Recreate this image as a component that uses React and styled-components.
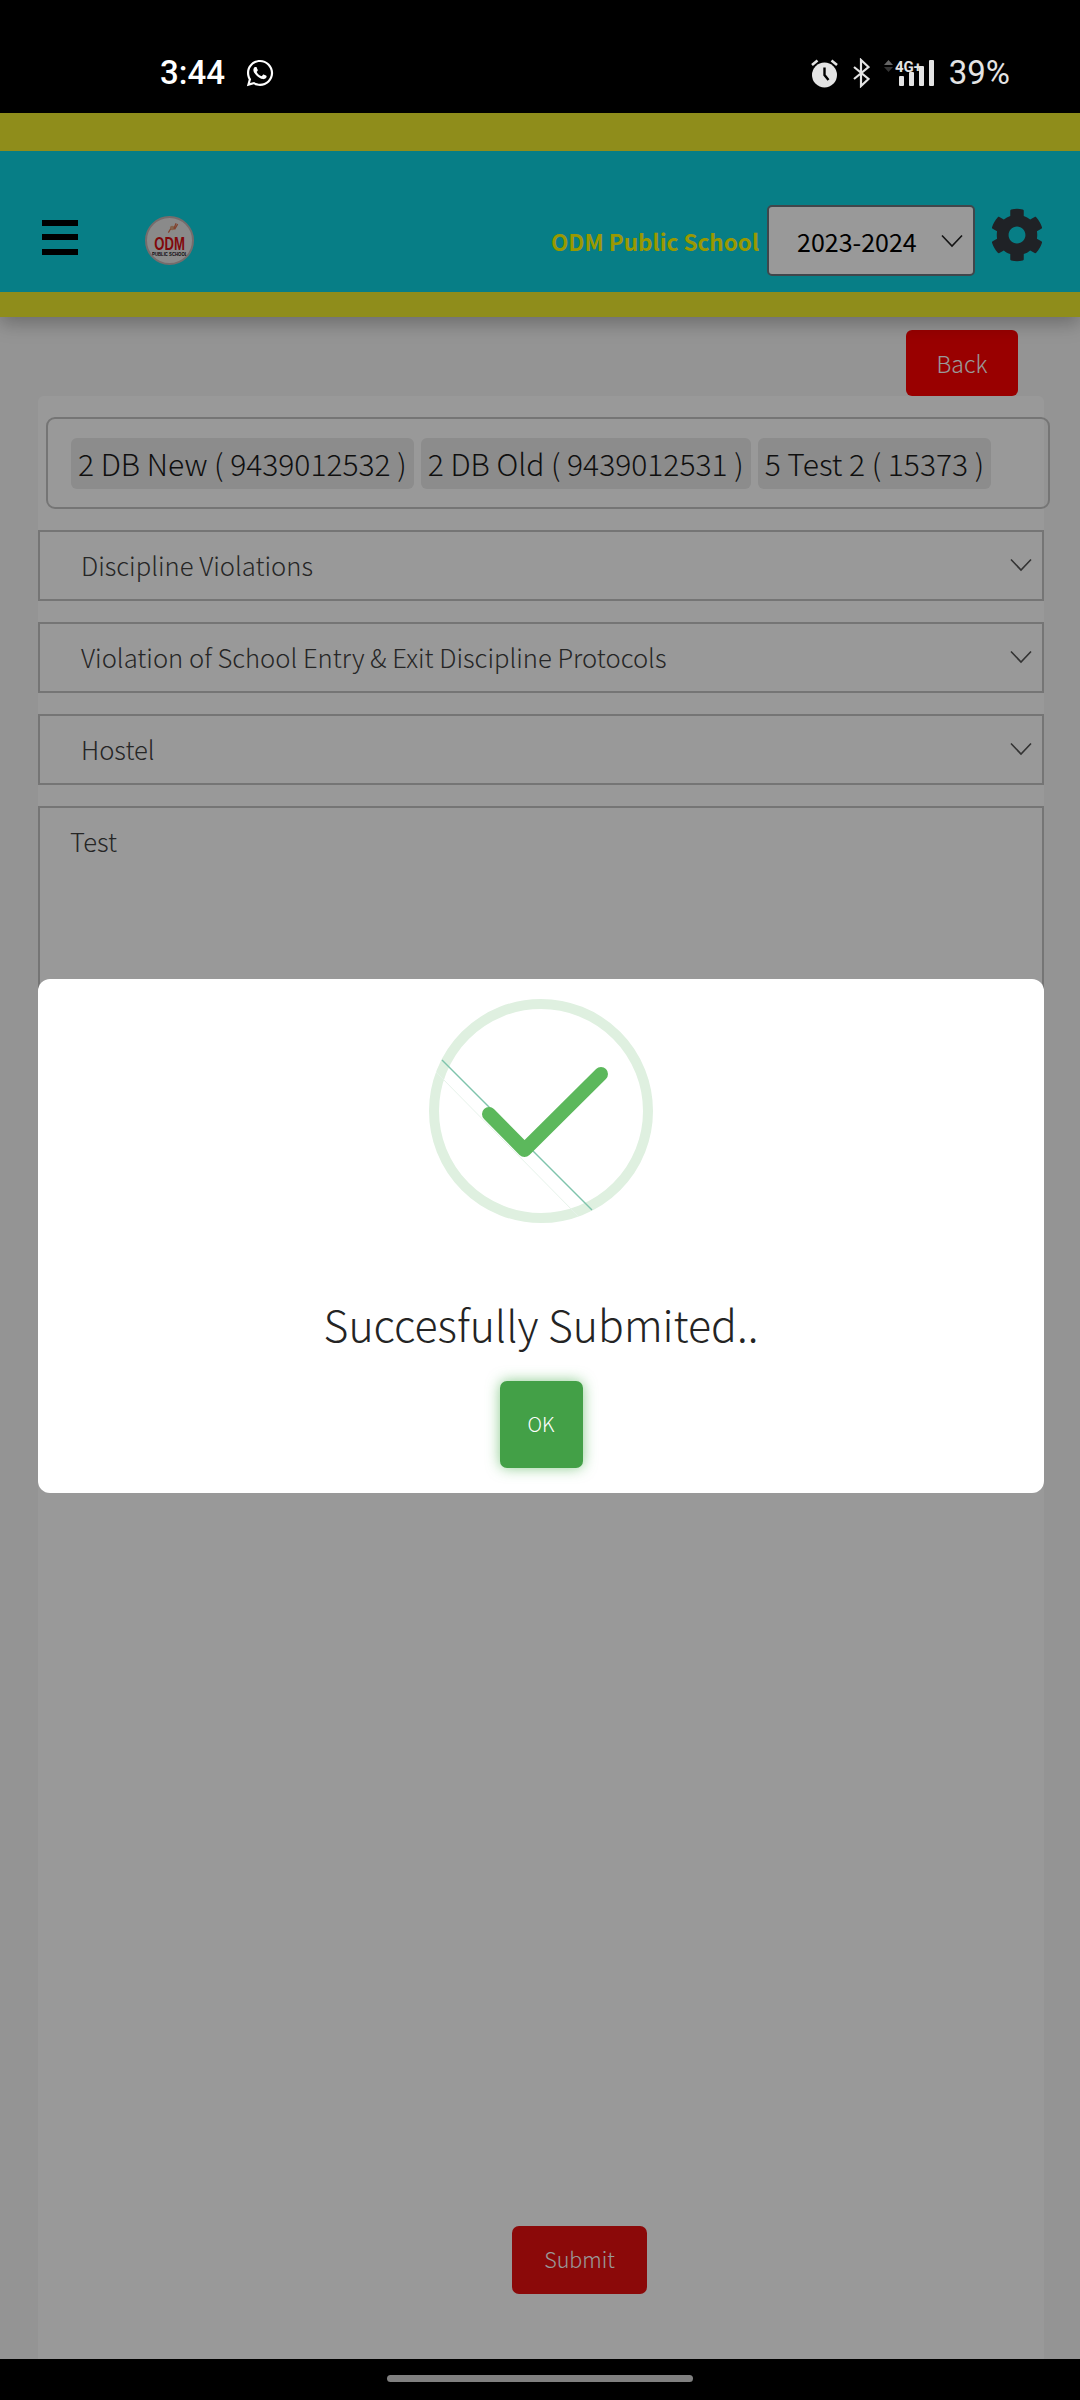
import React from "react";
import styled, { createGlobalStyle } from "styled-components";
import { FaCog, FaWhatsapp } from "react-icons/fa";

const Global = createGlobalStyle`
  html, body { margin: 0; padding: 0; background: #000; }
  #root { width: 1080px; height: 2400px; }
  * { box-sizing: border-box; }
`;

const sans = `"Noto Sans CJK SC", "Noto Sans", sans-serif`;

const Screen = styled.div`
  position: relative;
  width: 1080px;
  height: 2400px;
  display: flex;
  flex-direction: column;
  overflow: hidden;
  background: #000;
  font-family: ${sans};
`;

const StatusBar = styled.div`
  height: 113px;
  flex: none;
  padding: 32px 70px 0 160px;
  display: flex;
  align-items: center;
  justify-content: space-between;
  color: #fff;
  font-family: Roboto, sans-serif;
  position: relative;
  z-index: 3;
`;
const StatusGroup = styled.div`
  display: flex;
  align-items: center;
  gap: ${(p) => p.$gap}px;
`;
const Time = styled.span`
  font-size: 33px;
  font-weight: 500;
  line-height: 40px;
`;
const Battery = styled.span`
  font-size: 33px;
  font-weight: 400;
  line-height: 40px;
  color: #e4e4e4;
`;

const Page = styled.div`
  flex: 1;
  display: flex;
  flex-direction: column;
  background: #f7f7f7;
  min-height: 0;
`;

const AppBar = styled.header`
  flex: none;
  height: 204px;
  background: #0dd2df;
  border-top: 38px solid #eeeb2d;
  border-bottom: 25px solid #eeeb2d;
  box-shadow: 0 6px 18px rgba(0, 0, 0, 0.28);
  display: flex;
  align-items: center;
  padding: 38px 36px 0 42px;
  position: relative;
  z-index: 1;
`;
const Burger = styled.div`
  width: 36px;
  height: 35px;
  display: flex;
  flex-direction: column;
  justify-content: space-between;
  margin-top: -7px;
  span {
    display: block;
    height: 6px;
    background: #000;
  }
`;
const Logo = styled.div`
  width: 49px;
  height: 49px;
  margin-left: 67px;
  border-radius: 50%;
  background: #e6e6e6;
  border: 2px solid #c4b4b4;
  display: flex;
  flex-direction: column;
  align-items: center;
  justify-content: flex-end;
  padding-bottom: 5px;
  position: relative;
  overflow: hidden;
  flex: none;
`;
const LogoMain = styled.span`
  font: 700 16px/14px "Liberation Sans", sans-serif;
  color: #d80d12;
  transform: scale(0.82, 1.12);
`;
const LogoSub = styled.span`
  font: 700 5px/7px "Liberation Sans", sans-serif;
  color: #111;
  white-space: nowrap;
  transform: scaleX(0.85);
`;
const LogoFigure = styled.svg`
  position: absolute;
  top: 3px;
  left: 19px;
`;
const School = styled.span`
  margin-left: auto;
  font-size: 22.5px;
  font-weight: 700;
  color: #ffff00;
  white-space: nowrap;
`;
const YearSelect = styled.div`
  width: 208px;
  height: 71px;
  margin-left: 8px;
  background: #fff;
  border: 2px solid #6c757d;
  border-radius: 5px;
  display: flex;
  align-items: center;
  justify-content: space-between;
  padding: 0 10px 0 28px;
  font-size: 25px;
  color: #000;
  flex: none;
`;
const Gear = styled(FaCog)`
  color: #343a40;
  font-size: 54px;
  margin-left: 15px;
  margin-top: -12px;
  flex: none;
`;

const Back = styled.button`
  align-self: flex-end;
  width: 112px;
  height: 66px;
  margin: 13px 62px 0 0;
  border: 0;
  border-radius: 6px;
  background: #ff0000;
  color: #fff;
  font: 300 23px ${sans};
  flex: none;
`;

const Card = styled.main`
  flex: 1;
  margin: 0 36px 0 38px;
  background: #fff;
  border-radius: 6px 6px 0 0;
  display: flex;
  flex-direction: column;
  padding-top: 21px;
  align-items: stretch;
  min-height: 0;
`;
const ChipBox = styled.div`
  width: 1004px;
  height: 92px;
  margin-left: 8px;
  border: 2px solid #c4c4c4;
  border-radius: 9px;
  display: flex;
  align-items: center;
  gap: 7px;
  padding: 0 0 0 23px;
`;
const Chip = styled.span`
  height: 51px;
  padding: 0 7px;
  border-radius: 6px;
  background: #e9e9e9;
  display: flex;
  align-items: center;
  font-size: 30px;
  font-weight: 300;
  color: #1a1a1a;
  white-space: nowrap;
`;
const Dropdown = styled.div`
  height: 71px;
  margin-top: 21px;
  border: 2px solid #c4c4c4;
  display: flex;
  align-items: center;
  justify-content: space-between;
  padding: 0 10px 2px 41px;
  font-size: 25.600px;
  font-weight: 300;
  color: #404040;
`;
const TextBox = styled.div`
  height: 600px;
  margin-top: 21px;
  border: 2px solid #c4c4c4;
  padding: 13px 30px;
  font-size: 25.600px;
  font-weight: 300;
  line-height: 40px;
  color: #404040;
`;
const SubmitRow = styled.div`
  margin-top: auto;
  padding: 0 397px 65px 474px;
  display: flex;
`;
const Submit = styled.button`
  width: 135px;
  height: 68px;
  border: 0;
  border-radius: 7px;
  background: #e81010;
  color: #fff;
  padding: 0 0 4px;
  font: 300 21.500px ${sans};
`;

const Backdrop = styled.div`
  position: absolute;
  left: 0;
  right: 0;
  top: 113px;
  height: 2246px;
  background: rgba(0, 0, 0, 0.4);
  z-index: 2;
`;
const Modal = styled.div`
  position: absolute;
  left: 38px;
  top: 866px;
  width: 1006px;
  height: 514px;
  background: #fff;
  border-radius: 12px;
  display: flex;
  flex-direction: column;
  align-items: center;
  padding-top: 20px;
`;
const CheckArt = styled.svg`
  display: block;
  flex: none;
`;
const Title = styled.h2`
  margin: 72px 0 0;
  font-size: 42.800px;
  font-weight: 300;
  line-height: 56px;
  color: #242424;
`;
const Ok = styled.button`
  width: 83px;
  height: 87px;
  margin-top: 30px;
  border: 0;
  border-radius: 7px;
  background: #43a047;
  box-shadow: 0 0 14px rgba(76, 175, 80, 0.65);
  color: #fff;
  padding: 0 0 3px;
  font: 300 20px ${sans};
`;

const Nav = styled.div`
  height: 41px;
  flex: none;
  background: #000;
  display: flex;
  justify-content: center;
  padding-top: 16px;
`;
const Pill = styled.div`
  width: 306px;
  height: 7px;
  border-radius: 4px;
  background: #808080;
`;

const Chevron = ({ dark }) => (
  <svg width="22" height="14" viewBox="0 0 22 14" fill="none">
    <path d="M1 1.500 L11 12 L21 1.500" stroke={dark ? "#222" : "#555"} strokeWidth="1.600" />
  </svg>
);

const Alarm = () => (
  <svg width="27" height="30" viewBox="0 0 27 30">
    <circle cx="13.500" cy="17" r="12.500" fill="#e4e4e4" />
    <path d="M13.500 9.500 V17 L17.500 22" stroke="#000" strokeWidth="2.400" fill="none" />
    <path d="M1 7 L6.500 2.500 M26 7 L20.500 2.500" stroke="#e4e4e4" strokeWidth="2.600" />
  </svg>
);
const Bluetooth = () => (
  <svg width="17" height="30" viewBox="0 0 17 30" fill="none">
    <path d="M1 9 L15.500 21 L8 28 V2 L15.500 9 L1 21" stroke="#e4e4e4" strokeWidth="2.200" />
  </svg>
);
const Signal = () => (
  <svg width="50" height="32" viewBox="0 0 50 32">
    <path d="M0 8 L4.500 3 L9 8 Z" fill="#666" />
    <path d="M0 10 L4.500 15 L9 10 Z" fill="#333" />
    <text x="11" y="15" fontFamily="Roboto, sans-serif" fontWeight="700" fontSize="15" fill="#e4e4e4">4G+</text>
    <rect x="15" y="19" width="5" height="10" rx="1" fill="#e4e4e4" />
    <rect x="25" y="15" width="5" height="14" rx="1" fill="#e4e4e4" />
    <rect x="35" y="9" width="5" height="20" rx="1" fill="#e4e4e4" />
    <rect x="45" y="3" width="5" height="26" rx="1" fill="#e4e4e4" />
  </svg>
);
const Check = () => (
  <CheckArt width="224" height="224" viewBox="429 999 224 224">
    <circle cx="541" cy="1111" r="107" fill="none" stroke="#dff0e0" strokeWidth="10" />
    <path d="M442 1060 L592 1210" stroke="#7fc4ac" strokeWidth="1.400" />
    <path d="M436 1072 L578 1216" stroke="#e6f2ea" strokeWidth="1" />
    <path d="M489 1114 L524.500 1150 L601 1074" fill="none" stroke="#5cb85c" strokeWidth="14" strokeLinecap="round" strokeLinejoin="round" />
  </CheckArt>
);

export default function App() {
  return (
    <Screen>
      <Global />
      <StatusBar>
        <StatusGroup $gap={20}>
          <Time>3:44</Time>
          <FaWhatsapp size={30} color="#fff" />
        </StatusGroup>
        <StatusGroup $gap={14.5}>
          <Alarm />
          <Bluetooth />
          <Signal />
          <Battery>39%</Battery>
        </StatusGroup>
      </StatusBar>
      <Page>
        <AppBar>
          <Burger><span /><span /><span /></Burger>
          <Logo>
            <LogoFigure width="14" height="14" viewBox="0 0 18 14">
              <circle cx="8" cy="7" r="3" fill="#d8a47f" />
              <path d="M3 13 L6 8 M13 1 L10 8 M15 2 L11 9" stroke="#d8704f" strokeWidth="1.600" />
            </LogoFigure>
            <LogoMain>ODM</LogoMain>
            <LogoSub>PUBLIC SCHOOL</LogoSub>
          </Logo>
          <School>ODM Public School</School>
          <YearSelect>2023-2024<Chevron dark /></YearSelect>
          <Gear />
        </AppBar>
        <Back>Back</Back>
        <Card>
          <ChipBox>
            <Chip>2 DB New ( 9439012532 )</Chip>
            <Chip>2 DB Old ( 9439012531 )</Chip>
            <Chip>5 Test 2 ( 15373 )</Chip>
          </ChipBox>
          <Dropdown>Discipline Violations<Chevron /></Dropdown>
          <Dropdown>Violation of School Entry &amp; Exit Discipline Protocols<Chevron /></Dropdown>
          <Dropdown>Hostel<Chevron /></Dropdown>
          <TextBox>Test</TextBox>
          <SubmitRow><Submit>Submit</Submit></SubmitRow>
        </Card>
      </Page>
      <Nav><Pill /></Nav>
      <Backdrop>
        <Modal>
          <Check />
          <Title>Succesfully Submited..</Title>
          <Ok>OK</Ok>
        </Modal>
      </Backdrop>
    </Screen>
  );
}
